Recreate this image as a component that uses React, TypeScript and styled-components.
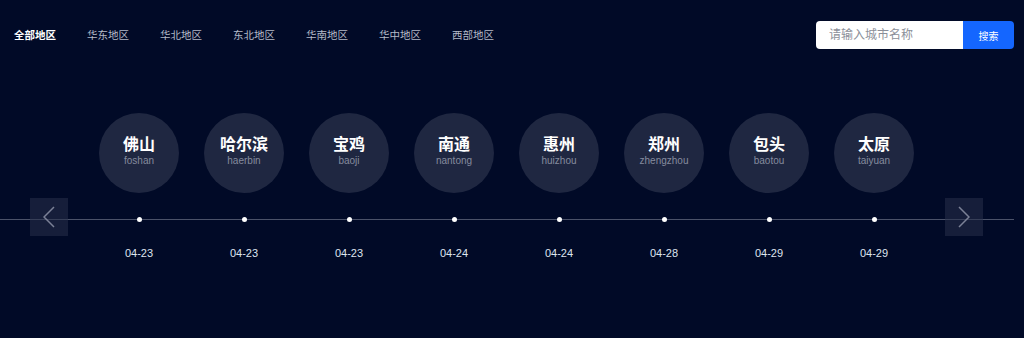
import React from "react";
import styled, { createGlobalStyle } from "styled-components";

const GlobalStyle = createGlobalStyle`
    html, body {
        margin: 0;
        padding: 0;
        background: #010a27;
        font-family: "Liberation Sans", "Noto Sans CJK SC", sans-serif;
    }
`;

const Page = styled.div`
    width: 1014px;
    height: 338px;
    background: #010a27;
`;

const Header = styled.div`
    display: flex;
    align-items: center;
    justify-content: space-between;
    padding: 21px 0 0 14px;
    height: 28px;
`;

const Regions = styled.div`
    display: flex;
    gap: 31px;
`;

const RegionTab = styled.span<{ $active?: boolean }>`
    font-size: 10.5px;
    line-height: 14px;
    color: ${(p) => (p.$active ? "#ffffff" : "#b4bac8")};
    font-weight: ${(p) => (p.$active ? 700 : 400)};
    cursor: pointer;
`;

const Search = styled.div`
    display: flex;
    width: 198px;
    height: 28px;
    border-radius: 4px;
    overflow: hidden;
`;

const SearchInput = styled.input`
    flex: 1;
    min-width: 0;
    border: 0;
    outline: none;
    padding: 0 0 0 13px;
    font-size: 12px;
    color: #333;
    background: #ffffff;
    font-family: "Liberation Sans", "Noto Sans CJK SC", sans-serif;

    &::placeholder {
        color: #8b8f99;
    }
`;

const SearchButton = styled.button`
    width: 51px;
    border: 0;
    background: #1466ff;
    color: #ffffff;
    font-size: 10px;
    font-family: "Liberation Sans", "Noto Sans CJK SC", sans-serif;
    cursor: pointer;
`;

const Carousel = styled.div`
    position: relative;
    display: flex;
    align-items: flex-start;
    padding: 0 31px 0 30px;
    margin-top: 64px;

    &::before {
        content: "";
        position: absolute;
        left: 0;
        right: 0;
        top: 105.5px;
        height: 1px;
        background: #4b5269;
    }
`;

const Arrow = styled.button`
    position: relative;
    z-index: 1;
    flex: 0 0 38px;
    height: 38px;
    margin-top: 85px;
    padding: 0;
    border: 0;
    background: rgba(40, 48, 74, 0.55);
    display: flex;
    align-items: center;
    justify-content: center;
    cursor: pointer;
`;

const Track = styled.div`
    flex: 1;
    display: grid;
    grid-template-columns: repeat(8, 1fr);
    margin: 0 18.5px;
`;

const Stop = styled.div`
    display: flex;
    flex-direction: column;
    align-items: center;
`;

const Bubble = styled.div`
    width: 80px;
    height: 80px;
    border-radius: 50%;
    background: #1f2741;
    display: flex;
    flex-direction: column;
    align-items: center;
    justify-content: center;
`;

const CityName = styled.div`
    font-size: 16px;
    line-height: 20px;
    font-weight: 700;
    color: #ffffff;
    margin-top: -4px;
`;

const Pinyin = styled.div`
    font-size: 10px;
    line-height: 12px;
    color: #858b9e;
`;

const Dot = styled.div`
    position: relative;
    z-index: 1;
    width: 5px;
    height: 5px;
    border-radius: 50%;
    background: #ffffff;
    margin-top: 23.5px;
`;

const DateLabel = styled.div`
    margin-top: 24px;
    font-size: 11px;
    line-height: 14px;
    color: #dfe4ef;
`;

const regions = ["全部地区", "华东地区", "华北地区", "东北地区", "华南地区", "华中地区", "西部地区"];

const cities = [
    { name: "佛山", pinyin: "foshan", date: "04-23" },
    { name: "哈尔滨", pinyin: "haerbin", date: "04-23" },
    { name: "宝鸡", pinyin: "baoji", date: "04-23" },
    { name: "南通", pinyin: "nantong", date: "04-24" },
    { name: "惠州", pinyin: "huizhou", date: "04-24" },
    { name: "郑州", pinyin: "zhengzhou", date: "04-28" },
    { name: "包头", pinyin: "baotou", date: "04-29" },
    { name: "太原", pinyin: "taiyuan", date: "04-29" },
];

const Chevron = ({ dir }: { dir: "left" | "right" }) => (
    <svg width="12" height="22" viewBox="0 0 12 22" fill="none">
        <polyline
            points={dir === "left" ? "11,1 1,11 11,21" : "1,1 11,11 1,21"}
            stroke="#7b8196"
            strokeWidth="1.5"
        />
    </svg>
);

export default function App() {
    return (
        <Page>
            <GlobalStyle />
            <Header>
                <Regions>
                    {regions.map((r, i) => (
                        <RegionTab key={r} $active={i === 0}>
                            {r}
                        </RegionTab>
                    ))}
                </Regions>
                <Search>
                    <SearchInput placeholder="请输入城市名称" />
                    <SearchButton>搜索</SearchButton>
                </Search>
            </Header>
            <Carousel>
                <Arrow>
                    <Chevron dir="left" />
                </Arrow>
                <Track>
                    {cities.map((c) => (
                        <Stop key={c.pinyin}>
                            <Bubble>
                                <CityName>{c.name}</CityName>
                                <Pinyin>{c.pinyin}</Pinyin>
                            </Bubble>
                            <Dot />
                            <DateLabel>{c.date}</DateLabel>
                        </Stop>
                    ))}
                </Track>
                <Arrow>
                    <Chevron dir="right" />
                </Arrow>
            </Carousel>
        </Page>
    );
}
